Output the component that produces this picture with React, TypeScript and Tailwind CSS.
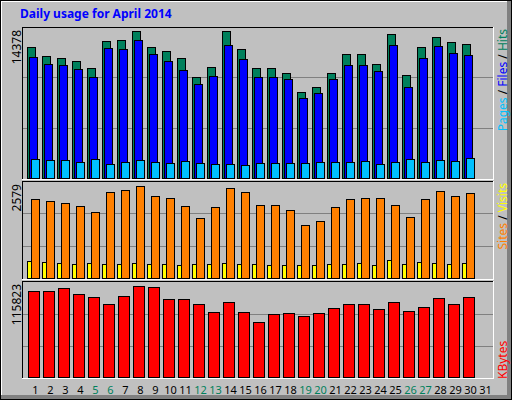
const hits = [45,54,56,59,66,39,38,29,45,49,56,75,65,29,47,66,66,71,90,85,71,52,52,62,32,73,45,35,40,42];
const files = [55,62,63,67,75,46,47,38,52,59,68,82,74,43,57,75,75,77,96,91,77,63,63,69,43,85,56,44,51,53];
const pages = [157,158,158,160,157,162,160,158,160,161,159,161,162,162,163,161,161,161,161,160,160,160,159,162,160,157,160,158,159,156];
const visits = [197,199,201,204,210,190,188,184,194,196,204,216,205,186,190,203,203,208,223,219,205,197,196,196,203,215,197,189,194,191];
const sites = [259,260,261,262,261,262,262,261,262,262,263,262,262,261,262,262,263,263,263,263,262,262,261,263,258,262,260,261,262,261];
const kbytes = [289,289,286,292,295,302,294,284,285,297,297,302,310,300,310,320,312,311,314,311,306,302,302,307,300,309,305,296,302,295];
const weekend = [5, 6, 12, 13, 19, 20, 26, 27];
const cx = (i: number) => 34 + 15 * i;

function Bar({ x, top, bottom, w, fill }: { x: number; top: number; bottom: number; w: number; fill: string }) {
  return <rect x={x + 0.5} y={top + 0.5} width={w} height={bottom - top - 1} fill={fill} stroke="#000" strokeWidth={1} />;
}

function Panel({ y, h }: { y: number; h: number }) {
  const step = Math.round(h / 3);
  return (
    <g>
      <rect x={20} y={y} width={471} height={h} fill="#c0c0c0" />
      {[1, 2].map(k => <line key={k} x1={20} x2={491} y1={y + h - step * k + 0.5} y2={y + h - step * k + 0.5} stroke="#808080" />)}
      <line x1={20} x2={491} y1={y + 0.5} y2={y + 0.5} stroke="#000" />
      <line x1={20.5} x2={20.5} y1={y} y2={y + h} stroke="#000" />
      <line x1={20} x2={492} y1={y + h + 0.5} y2={y + h + 0.5} stroke="#fff" />
      <line x1={491.5} x2={491.5} y1={y} y2={y + h + 1} stroke="#fff" />
    </g>
  );
}

export default function App() {
  return (
    <div className="relative w-[512px] h-[400px] bg-[#c0c0c0] border border-black shadow-[inset_-4px_-4px_0_#808080,inset_1px_1px_0_#fff] overflow-hidden">
      <div className="pl-[19px] pt-[4px] text-[12px] font-bold text-[#0000ff] font-['Liberation_Mono']">Daily usage for April 2014</div>
      <svg className="absolute left-0 top-0" width={512} height={400} viewBox="-1 -1 512 400" shapeRendering="crispEdges">
        <Panel y={25} h={152} />
        <Panel y={179} h={98} />
        <Panel y={279} h={97} />
        {hits.map((v, i) => (
          <g key={i}>
            <Bar x={cx(i) - 9} top={v} bottom={177} w={8} fill="#00805c" />
            <Bar x={cx(i) - 7} top={files[i]} bottom={177} w={8} fill="#0000ff" />
            <Bar x={cx(i) - 5} top={pages[i]} bottom={177} w={8} fill="#00c0ff" />
            <Bar x={cx(i) - 9} top={sites[i]} bottom={277} w={4} fill="#ffff00" />
            <Bar x={cx(i) - 5} top={visits[i]} bottom={277} w={8} fill="#ff8000" />
            <Bar x={cx(i) - 8} top={kbytes[i]} bottom={376} w={11} fill="#ff0000" />
          </g>
        ))}
        <g className="font-['Liberation_Sans'] text-[12px]" fill="#000">
          <text transform="rotate(-90 19 28)" x={19} y={28} textAnchor="end">14378</text>
          <text transform="rotate(-90 19 182)" x={19} y={182} textAnchor="end">2579</text>
          <text transform="rotate(-90 19 282)" x={19} y={282} textAnchor="end">115823</text>
        </g>
        <g className="font-['Liberation_Mono'] text-[12px]">
          <text transform="rotate(-90 505 27)" x={505} y={27} textAnchor="end">
            <tspan fill="#00c0ff">Pages</tspan><tspan fill="#000"> / </tspan><tspan fill="#0000ff">Files</tspan><tspan fill="#000"> / </tspan><tspan fill="#00805c">Hits</tspan>
          </text>
          <text transform="rotate(-90 505 181)" x={505} y={181} textAnchor="end">
            <tspan fill="#ff8000">Sites</tspan><tspan fill="#000"> / </tspan><tspan fill="#ffff00">Visits</tspan>
          </text>
          <text transform="rotate(-90 505 377)" x={505} y={377} fill="#ff0000">KBytes</text>
        </g>
        <g className="font-['Liberation_Sans'] text-[11px]">
          {Array.from({ length: 31 }, (_, i) => (
            <text key={i} x={cx(i) - 0.5} y={392} textAnchor="middle" fill={weekend.includes(i + 1) ? "#00805c" : "#000"}>{i + 1}</text>
          ))}
        </g>
      </svg>
    </div>
  );
}
